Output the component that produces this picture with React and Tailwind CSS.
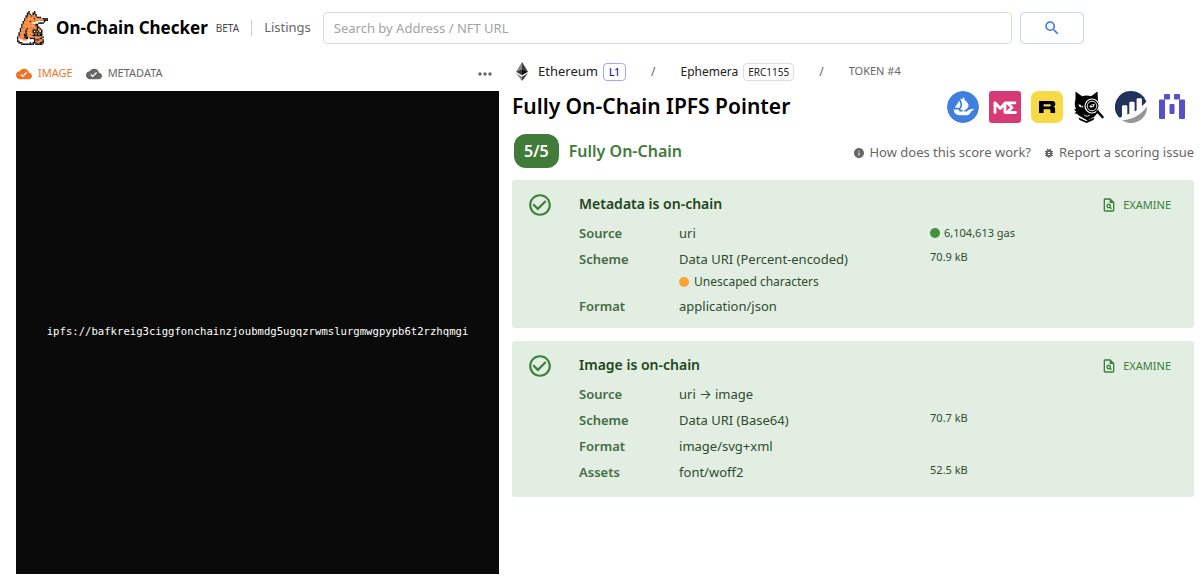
import React from "react";
import {
  MdBugReport,
  MdCheckCircleOutline,
  MdCloudDone,
  MdInfo,
  MdMoreHoriz,
  MdOutlinePlagiarism,
  MdSearch,
} from "react-icons/md";
import { SiOpensea } from "react-icons/si";

// k = black, o = orange, w = white
const FOX = [
  "........k...k.........",
  ".......kk..kk.........",
  ".......kok.kok........",
  "......kkookook........",
  "......koooooookkk.....",
  ".....kooooookoooookkkk",
  ".....koooooooooooookkk",
  "....kooookoooowwwwwk..",
  "....koooooowwwwkkkk...",
  "...koooooooookk.......",
  "...koooooooookk.......",
  "...kooooooooookk......",
  "..kooookooooookok.....",
  "..koookooookkkkook....",
  "..koookooookwkokwk....",
  ".kooookooookkkkkkk....",
  ".koookkoooookokokk....",
  ".koookkooookkkkkkk....",
  "kooookkkooooooooook...",
  "kwooookkwkkkkoookk....",
  "kwwwooowwwwwkkkkook...",
  "kkwwwwwwwwwwkoooook...",
  ".kkkwwwwwkwkkkookkk...",
  "...kkkkkkkkk.kkkkk....",
];

const FOX_COLORS = { k: "#000000", o: "#f47a26", w: "#ffffff" };

const CARDS = [
  {
    title: "Metadata is on-chain",
    rows: [
      { label: "Source", value: "uri", gas: "6,104,613 gas" },
      {
        label: "Scheme",
        value: "Data URI (Percent-encoded)",
        warning: "Unescaped characters",
        size: "70.9 kB",
      },
      { label: "Format", value: "application/json" },
    ],
  },
  {
    title: "Image is on-chain",
    rows: [
      { label: "Source", value: "uri → image" },
      { label: "Scheme", value: "Data URI (Base64)", size: "70.7 kB" },
      { label: "Format", value: "image/svg+xml" },
    ],
    assets: [{ value: "font/woff2", size: "52.5 kB" }],
  },
];

function FoxLogo() {
  return (
    <svg
      viewBox="0 0 22 24"
      className="w-[31px] h-[34px] shrink-0"
      aria-hidden="true"
    >
      {FOX.map((row, y) =>
        row.split("").map((c, x) =>
          c === "." ? null : (
            <rect
              key={x + "-" + y}
              x={x}
              y={y}
              width="1.05"
              height="1.05"
              fill={FOX_COLORS[c]}
            />
          )
        )
      )}
    </svg>
  );
}

function EthereumIcon() {
  return (
    <svg viewBox="0 0 24 38" className="w-3 h-[19px]" aria-hidden="true">
      <path d="M12 0 0 19.500 12 14z" fill="#8a8a8a" />
      <path d="M12 0v14l12 5.500z" fill="#3a3a3a" />
      <path d="M0 19.500 12 14v12.500z" fill="#3c3c3b" />
      <path d="M24 19.500 12 14v12.500z" fill="#0f0f0f" />
      <path d="M0 22.500 12 29.500V38z" fill="#8c8c8c" />
      <path d="M24 22.500 12 29.500V38z" fill="#3a3a3a" />
    </svg>
  );
}

function MagicEdenIcon() {
  return (
    <svg viewBox="0 0 32 32" className="w-8 h-8" aria-hidden="true">
      <rect width="32" height="32" rx="3" fill="#d63b77" />
      <path
        d="M6 21.500V11.800l5.300 5.700 5.200-5.700H26M16 12.500v9M19 12.500l4 4-5 5H26.500"
        fill="none"
        stroke="#fff"
        strokeWidth="2.800"
        strokeLinecap="round"
        strokeLinejoin="round"
      />
    </svg>
  );
}

function RaribleIcon() {
  return (
    <svg viewBox="0 0 32 32" className="w-8 h-8" aria-hidden="true">
      <rect width="32" height="32" rx="7" fill="#f7da45" />
      <path
        fillRule="evenodd"
        d="M8 10h13c2.200 0 3.300 1 3.300 3 0 1.500-.7 2.400-1.800 2.700 1.200.3 1.600 1 1.600 2.200V22h-4.600v-2.600c0-.8-.3-1.100-1.100-1.100h-5.800V22H8zm4.600 3.200v2.200h6c.8 0 1.200-.3 1.200-1.100s-.4-1.100-1.200-1.100z"
        fill="#000"
      />
    </svg>
  );
}

function CatIcon() {
  return (
    <svg viewBox="0 0 32 32" className="w-8 h-8" aria-hidden="true">
      <path
        d="M2.500.5 9 5.200c3-.8 6-.8 9 0L24.500.5 25 10c1.500 3 1.500 8-.5 12l-3 3.500-7 4-7-4-3.500-2.500L1 22l2.500-1L1 18.500l2-.5C1.500 15 1.500 11 2.500 8z"
        fill="#000"
      />
      <path d="M5.500 26.500 13 30l8.500-3.500-1 2.500-7 3-7-3z" fill="#000" />
      <path d="M5.500 13.500c2-.3 4 .5 5 2.700-2.800.6-4.700-.4-5-2.700z" fill="#fff" />
      <circle cx="8.500" cy="14.800" r=".8" fill="#000" />
      <path d="m11 24 3 1.400 3-1.400" fill="none" stroke="#fff" strokeWidth=".8" />
      <circle cx="19" cy="15" r="7" fill="#000" stroke="#fff" strokeWidth="1.200" />
      <circle cx="19" cy="15" r="4.800" fill="none" stroke="#fff" strokeWidth=".9" />
      <path d="M16.300 16c.8-2 2.700-3 5.300-3 0 2.700-2 4.300-5.300 3z" fill="#fff" />
      <circle cx="19.300" cy="14.600" r=".8" fill="#000" />
      <path d="m24.500 20.500 5 5.500" stroke="#000" strokeWidth="2.600" strokeLinecap="round" />
    </svg>
  );
}

function EtherscanIcon() {
  return (
    <svg viewBox="0 0 32 32" className="w-8 h-8" aria-hidden="true">
      <path
        d="M16 0a16 16 0 0 0-12.500 26c.7.900 3.500.5 3.500-1V15.500c0-.8.500-1.300 1.300-1.300H11c.8 0 1.300.5 1.300 1.300v8l2-.8V12c0-.8.500-1.300 1.300-1.300h2.700c.8 0 1.300.5 1.300 1.300v8.500l2-1.200V8.500c0-.8.500-1.300 1.300-1.300h2.700c.8 0 1.300.5 1.300 1.300V15c2-1.500 3.500-3 4.500-4.500A16 16 0 0 0 16 0z"
        fill="#21325b"
      />
      <path
        d="M32 15.500a16 16 0 0 1-24.800 13.800C19 28.500 27 22.500 32 15.500z"
        fill="#979695"
      />
    </svg>
  );
}

function BlockIcon() {
  return (
    <svg viewBox="0 0 32 32" className="w-8 h-8" fill="#5850ca" aria-hidden="true">
      <rect x="7" y="3" width="6" height="5.500" rx="1" />
      <rect x="17" y="3" width="6" height="5.500" rx="1" />
      <path d="M3 8.500h5V27a1 1 0 0 1-1 1H3a1 1 0 0 1-1-1V9.500a1 1 0 0 1 1-1zM22 8.500h5a1 1 0 0 1 1 1V27a1 1 0 0 1-1 1h-4a1 1 0 0 1-1-1z" />
      <rect x="12.500" y="13" width="5" height="10" rx="1" />
    </svg>
  );
}

function Card({ title, rows, assets }) {
  return (
    <section className="flex bg-[#e2eee1] rounded-[3px] pl-[15px] pr-[23px] pt-3 pb-[9px] text-[#2f4c30]">
      <MdCheckCircleOutline className="w-[26px] h-[26px] mr-[26px] text-[#39803b] shrink-0" />
      <div className="flex-1 min-w-0">
        <div className="flex items-center justify-between h-6 mb-1">
          <h2 className="text-sm font-semibold text-[#1e4620]">{title}</h2>
          <button className="flex items-center gap-[6px] pt-[2px] text-[11px] text-[#39803b]">
            <MdOutlinePlagiarism className="w-4 h-4" />
            EXAMINE
          </button>
        </div>
        <dl>
          {rows.map((row) => (
            <div
              key={row.label}
              className="grid grid-cols-[100px_251px_1fr] text-[13px] leading-[26px]"
            >
              <dt className="font-semibold text-[#456c46]">{row.label}</dt>
              <dd>
                {row.value}
                {row.warning && (
                  <div className="flex items-center gap-[5px] text-xs leading-[18px] pt-px pb-[2px]">
                    <span className="w-[10px] h-[10px] rounded-full bg-[#f6a434]" />
                    {row.warning}
                  </div>
                )}
              </dd>
              {row.gas && (
                <dd className="flex items-center gap-1 text-[11px]">
                  <span className="w-[10px] h-[10px] rounded-full bg-[#43903f]" />
                  {row.gas}
                </dd>
              )}
              {row.size && <dd className="text-[11px] leading-[22px]">{row.size}</dd>}
            </div>
          ))}
          {assets && (
            <div className="grid grid-cols-[100px_1fr] pb-[3px] text-[13px] leading-[26px]">
              <dt className="font-semibold text-[#456c46]">Assets</dt>
              <dd>
                {assets.map((asset) => (
                  <div key={asset.value} className="grid grid-cols-[251px_1fr]">
                    <span>{asset.value}</span>
                    <span className="text-[11px] leading-[22px]">{asset.size}</span>
                  </div>
                ))}
              </dd>
            </div>
          )}
        </dl>
      </div>
    </section>
  );
}

export default function App() {
  return (
    <div className="bg-white text-black font-['Noto_Sans','Inter',sans-serif]">
      <header className="flex items-center h-14 pl-[17px] pr-[116px]">
        <a href="#" className="flex items-center gap-2">
          <FoxLogo />
          <span className="text-[17px] font-bold whitespace-nowrap">On-Chain Checker</span>
          <span className="text-[10px] text-[#444]">BETA</span>
        </a>
        <span className="w-px h-4 bg-[#d0d0d0] mx-3" />
        <a href="#" className="text-[13px] text-[#666]">
          Listings
        </a>
        <input
          type="text"
          aria-label="Search"
          placeholder="Search by Address / NFT URL"
          className="flex-1 min-w-0 h-8 ml-3 px-[10px] border border-[#d9d9d9] rounded text-[13px] placeholder:text-[#a3a3a3]"
        />
        <button
          aria-label="Search"
          className="flex items-center justify-center w-16 h-8 ml-2 border border-[#c3d9f3] rounded text-[#3a77d6]"
        >
          <MdSearch className="w-[18px] h-[18px]" />
        </button>
      </header>

      <main className="grid grid-cols-[17fr_24fr] gap-[13px] pl-4 pr-[6px]">
        <div>
          <div className="flex items-center h-[35px] text-[11px] text-[#666]">
            <button className="flex items-center gap-[6px] text-[#ec7427]">
              <MdCloudDone className="w-4 h-4" />
              IMAGE
            </button>
            <button className="flex items-center gap-[6px] ml-[13px]">
              <MdCloudDone className="w-4 h-4" />
              METADATA
            </button>
            <button aria-label="More" className="ml-auto mr-1">
              <MdMoreHoriz className="w-5 h-5" />
            </button>
          </div>
          <svg viewBox="0 0 500 500" className="w-full bg-[#0a0a0a]">
            <text
              x="250"
              y="253"
              textAnchor="middle"
              fill="#fff"
              className="text-[11px] font-['DejaVu_Sans_Mono',monospace]"
            >
              ipfs://bafkreig3ciggfonchainzjoubmdg5ugqzrwmslurgmwgpypb6t2rzhqmgi
            </text>
          </svg>
        </div>

        <div className="min-w-0">
          <nav className="flex items-center h-[30px] pt-px text-xs text-[#666]">
            <a href="#" className="flex items-center text-[13px] text-[#222] pl-1">
              <EthereumIcon />
              <span className="ml-[10px]">Ethereum</span>
              <span className="ml-[5px] px-[5px] border border-[#a9a5f5] rounded text-[10px] leading-4 font-medium text-[#1c1a8c]">
                L1
              </span>
            </a>
            <span className="mx-[25px]">/</span>
            <a href="#" className="flex items-center text-[#222]">
              Ephemera
              <span className="ml-[5px] px-1 border border-[#dcdcdc] rounded text-[10px] leading-4">
                ERC1155
              </span>
            </a>
            <span className="mx-[25px]">/</span>
            <span className="text-[11px]">TOKEN #4</span>
          </nav>

          <div className="flex items-center justify-between h-[42px]">
            <h1 className="text-[21px] font-semibold">Fully On-Chain IPFS Pointer</h1>
            <div className="flex items-center gap-[10px] pr-[5px]">
              <a href="#" aria-label="OpenSea">
                <SiOpensea className="w-8 h-8 rounded-full bg-white text-[#3f7fe0]" />
              </a>
              <a href="#" aria-label="Magic Eden">
                <MagicEdenIcon />
              </a>
              <a href="#" aria-label="Rarible">
                <RaribleIcon />
              </a>
              <a href="#" aria-label="Cat explorer">
                <CatIcon />
              </a>
              <a href="#" aria-label="Etherscan">
                <EtherscanIcon />
              </a>
              <a href="#" aria-label="Blocks">
                <BlockIcon />
              </a>
            </div>
          </div>

          <div className="flex items-center h-[34px] mt-[6px] mb-3">
            <span className="flex items-center h-[34px] px-[10px] ml-[2px] bg-[#417b39] rounded-xl text-white text-base font-semibold">
              5/5
            </span>
            <span className="ml-[10px] text-base font-semibold text-[#417b39]">
              Fully On-Chain
            </span>
            <div className="flex gap-3 ml-auto pt-[3px] text-[13px] text-[#666]">
              <a href="#" className="flex items-center gap-1">
                <MdInfo className="w-3 h-3" />
                How does this score work?
              </a>
              <a href="#" className="flex items-center gap-1">
                <MdBugReport className="w-3 h-3" />
                Report a scoring issue
              </a>
            </div>
          </div>

          <div className="flex flex-col gap-[13px]">
            {CARDS.map((card) => (
              <Card
                key={card.title}
                title={card.title}
                rows={card.rows}
                assets={card.assets}
              />
            ))}
          </div>
        </div>
      </main>
    </div>
  );
}
